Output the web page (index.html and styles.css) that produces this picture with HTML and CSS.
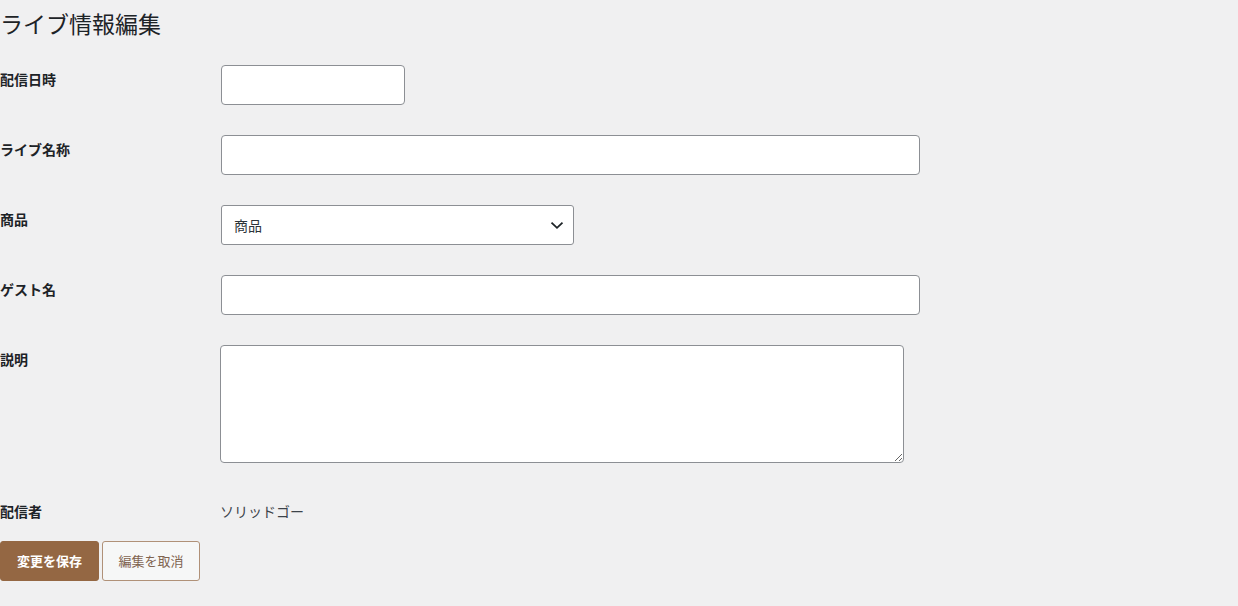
FILE: index.html
```html
<!DOCTYPE html>
<html lang="ja">
<head>
<meta charset="utf-8">
<title>ライブ情報編集</title>
<link rel="stylesheet" href="styles.css">
</head>
<body>
<div class="wrap">
  <h1 class="title">ライブ情報編集</h1>
  <form class="form">
    <table class="form-table">
      <tbody>
        <tr>
          <th><label for="date">配信日時</label></th>
          <td><input id="date" class="field field-date" type="text"></td>
        </tr>
        <tr>
          <th><label for="name">ライブ名称</label></th>
          <td><input id="name" class="field field-wide" type="text"></td>
        </tr>
        <tr>
          <th><label for="product">商品</label></th>
          <td>
            <div class="select">
              <span class="select-text">商品</span>
              <svg class="chev" width="14" height="14" viewBox="0 0 14 14"><path d="M1.5 4.6 L7 9.8 L12.5 4.6" fill="none" stroke="#1d2327" stroke-width="1.8"/></svg>
            </div>
          </td>
        </tr>
        <tr>
          <th><label for="guest">ゲスト名</label></th>
          <td><input id="guest" class="field field-wide" type="text"></td>
        </tr>
        <tr class="row-area">
          <th><label for="desc">説明</label></th>
          <td><textarea id="desc" class="area"></textarea></td>
        </tr>
        <tr class="row-plain">
          <th><span class="lbl">配信者</span></th>
          <td class="plain">ソリッドゴー</td>
        </tr>
      </tbody>
    </table>
    <div class="actions">
      <button type="button" class="btn btn-primary">変更を保存</button>
      <button type="button" class="btn btn-secondary">編集を取消</button>
    </div>
  </form>
</div>
</body>
</html>
```
FILE: styles.css
```css
* { box-sizing: border-box; }
html, body {
  margin: 0;
  padding: 0;
  background: #f0f0f1;
  color: #1d2327;
  font-family: "Noto Sans CJK JP", "Noto Sans", sans-serif;
  font-size: 13px;
}
.wrap { width: 100%; }
.title {
  font-size: 23px;
  font-weight: 400;
  margin: 0;
  padding: 8px 0 5px;
  line-height: 30px;
  color: #1d2327;
}
.form-table {
  border-collapse: collapse;
  margin-top: 7px;
  width: 100%;
}
.form-table th {
  width: 210px;
  text-align: left;
  vertical-align: top;
  padding: 18px 10px 22px 0;
  font-size: 14px;
  font-weight: 700;
  line-height: 22px;
  color: #1d2327;
}
.form-table td {
  vertical-align: top;
  padding: 15px 10px;
  line-height: 0;
}
.field {
  display: block;
  height: 40px;
  margin: 0 1px;
  border: 1px solid #8c8f94;
  border-radius: 4px;
  background: #fff;
  padding: 0 12px;
  font: inherit;
  font-size: 14px;
}
.field-date { width: 184px; }
.field-wide { width: 699px; }
.select {
  display: flex;
  align-items: center;
  justify-content: space-between;
  width: 353px;
  height: 40px;
  margin: 0 1px;
  border: 1px solid #8c8f94;
  border-radius: 3px;
  background: #fff;
  padding: 0 9px 0 12px;
  font-size: 14px;
  line-height: 20px;
  color: #2c3338;
}
.chev { display: block; }
.area {
  display: block;
  width: 684px;
  height: 118px;
  margin: 0;
  border: 1px solid #8c8f94;
  border-radius: 4px;
  background: #fff;
  font: inherit;
  resize: both;
}
.form-table .row-area td { padding-bottom: 18px; }
.form-table .row-plain th { padding: 19px 10px 18px 0; }
.form-table td.plain {
  padding: 19px 10px 18px;
  font-size: 14px;
  line-height: 22px;
  color: #3c434a;
}
.actions {
  display: flex;
  gap: 3px;
  padding-top: 1px;
}
.btn {
  height: 40px;
  padding: 0 15px;
  border-radius: 3px;
  font: inherit;
  font-size: 13px;
  line-height: 38px;
  cursor: pointer;
}
.btn-primary {
  background: #946743;
  border: 1px solid #946743;
  color: #fff;
  font-weight: 700;
  width: 99px;
}
.btn-secondary {
  background: #f6f7f7;
  border: 1px solid #b09178;
  color: #7f6450;
  width: 98px;
}
```
